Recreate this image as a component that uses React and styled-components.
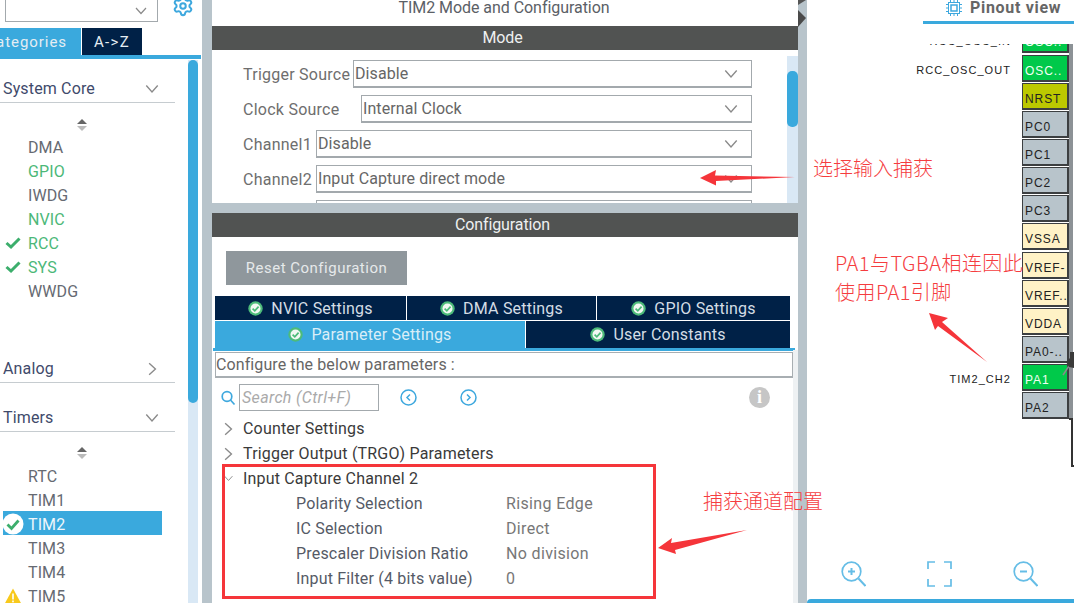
import React from 'react'
import styled, { createGlobalStyle } from 'styled-components'
import { Settings } from 'lucide-react'

const GlobalStyle = createGlobalStyle`
	html, body {
		margin: 0;
		padding: 0;
		background: #fff;
	}
	body {
		font-family: Roboto, "Liberation Sans", sans-serif;
		overflow: hidden;
	}
	* {
		box-sizing: border-box;
	}
	svg {
		flex: none;
	}
`

const Page = styled.div`
	position: relative;
	display: flex;
	width: 1074px;
	height: 603px;
	overflow: hidden;
	background: #fff;
`

const Gutter = styled.div`
	flex: none;
	width: ${props => props.$width}px;
	background: #b8c4cb;
`

const SplitBar = styled.div`
	flex: none;
	height: 10px;
	background: #b8c4cb;
`

/* left panel */
const LeftPanel = styled.div`
	flex: none;
	width: 202px;
	display: flex;
	flex-direction: column;
`

const TopRow = styled.div`
	display: flex;
	align-items: flex-start;
	height: 28px;
	padding-left: 5px;
`

const TopSelect = styled.div`
	display: flex;
	align-items: center;
	justify-content: flex-end;
	width: 153px;
	height: 22px;
	padding-right: 9px;
	border: 1px solid #a3a9ad;
	border-top: none;
`

const GearWrap = styled.div`
	display: flex;
	margin-left: 14px;
	margin-top: -5px;
	color: #3ea8de;
`

const ViewTabs = styled.div`
	display: flex;
	height: 31px;
	width: 201px;
	border-bottom: 4px solid #3aa9dd;
`

const ViewTab = styled.div`
	display: flex;
	align-items: center;
	justify-content: ${props => props.$active ? 'flex-end' : 'center'};
	width: ${props => props.$width}px;
	margin-right: 1px;
	padding-right: ${props => props.$active ? 14 : 0}px;
	background: ${props => props.$active ? '#3aa9dd' : '#002147'};
	color: #e4edf3;
	font-size: 15px;
	letter-spacing: ${props => props.$active ? 0.95 : 1.3}px;
`

const LeftBody = styled.div`
	flex: 1;
	display: flex;
	min-height: 0;
`

const LeftContent = styled.div`
	flex: none;
	width: 188px;
`

const ScrollTrack = styled.div`
	flex: none;
	width: ${props => props.$width}px;
	margin-top: ${props => props.$top}px;
	background: #d9e8f5;
`

const ScrollThumb = styled.div`
	height: ${props => props.$height}px;
	margin-top: ${props => props.$offset || 0}px;
	border-radius: 5px;
	background: #3aa9dd;
`

const SectionHead = styled.div`
	display: flex;
	align-items: center;
	justify-content: space-between;
	width: 175px;
	height: 30px;
	margin-top: ${props => props.$top}px;
	padding: 2px 15px 0 3px;
	border-bottom: 1px solid #c6ccd0;
	color: #3f4a6b;
	font-size: 16px;
	letter-spacing: 0.15px;
`

const SortMark = styled.div`
	display: flex;
	align-items: center;
	justify-content: center;
	width: 163px;
	height: 20px;
	margin-top: ${props => props.$top}px;
`

const ItemRow = styled.div`
	display: flex;
	align-items: center;
	width: 159px;
	height: 24px;
	margin-left: 3px;
	padding-top: ${props => props.$low ? 2 : 0}px;
	background: ${props => props.$selected ? '#3aa9dd' : 'transparent'};
	color: ${props => props.$selected ? '#eef6fb' : props.$ok ? '#4cb878' : '#666a72'};
	font-size: 16px;
	letter-spacing: 0.1px;
`

const ItemIcon = styled.div`
	display: flex;
	align-items: center;
	justify-content: center;
	flex: none;
	width: 20px;
	margin-right: 5px;
`

/* centre panel */
const CenterPanel = styled.div`
	flex: none;
	width: 586px;
	display: flex;
	flex-direction: column;
`

const Title = styled.div`
	height: 26px;
	padding: 0 2px 10px 0;
	color: #5b6066;
	font-size: 16px;
	line-height: 16px;
	text-align: center;
	letter-spacing: -0.05px;
`

const DarkBar = styled.div`
	flex: none;
	height: 24px;
	padding-right: 5px;
	background: #515352;
	color: #eef0f0;
	font-size: 16px;
	line-height: 24px;
	text-align: center;
	letter-spacing: -0.1px;
`

const ModeArea = styled.div`
	display: flex;
	height: 153px;
	overflow: hidden;
`

const ModeForm = styled.div`
	flex: none;
	width: 575px;
	display: flex;
	flex-direction: column;
	gap: 7px;
	padding: 10px 0 0 31px;
`

const FormRow = styled.div`
	display: flex;
	align-items: center;
	flex: none;
	width: 509px;
	height: 28px;
`

const FormLabel = styled.div`
	flex: none;
	width: ${props => props.$width}px;
	color: #6e6e6e;
	font-size: 16px;
	letter-spacing: 0.25px;
	white-space: nowrap;
`

const FormSelect = styled.div`
	flex: 1;
	display: flex;
	align-items: center;
	justify-content: space-between;
	height: 28px;
	padding: 0 12px 0 1px;
	border: 1px solid #a3a9ad;
	border-bottom-width: 2px;
	color: #666;
	font-size: 16px;
	letter-spacing: 0.08px;
`

const ConfigArea = styled.div`
	flex: 1;
	display: flex;
	flex-direction: column;
	position: relative;
	min-height: 0;
`

const ResetButton = styled.div`
	width: 181px;
	height: 34px;
	margin: 14px 0 0 14px;
	background: #8f979c;
	color: #e6e9ea;
	font-size: 15px;
	line-height: 34px;
	text-align: center;
	letter-spacing: 0.5px;
`

const TabsBlock = styled.div`
	display: flex;
	flex-direction: column;
	gap: 1px;
	margin: 11px 0 0 3px;
	width: 575px;
`

const TabLine = styled.div`
	display: flex;
	gap: 1px;
	height: ${props => props.$height}px;
`

const SettingTab = styled.div`
	display: flex;
	align-items: center;
	justify-content: center;
	gap: 8px;
	flex: ${props => props.$flex};
	background: ${props => props.$active ? '#3aa9dd' : '#002147'};
	color: ${props => props.$active ? '#d9eef8' : '#d4dde5'};
	font-size: 16px;
	letter-spacing: 0.2px;
`

const TabRule = styled.div`
	width: 582px;
	height: 3px;
	margin-left: 1px;
	background: #3aa9dd;
`

const InfoStrip = styled.div`
	position: absolute;
	top: 113px;
	right: 0;
	bottom: 0;
	width: 5px;
	background: #eef1f3;
`

const ParamsCaption = styled.div`
	width: 578px;
	height: 26px;
	margin: 1px 0 0 3px;
	border: 1px solid #a8aeb2;
	border-bottom-width: 2px;
	color: #666;
	font-size: 16px;
	line-height: 24px;
	letter-spacing: 0.1px;
`

const SearchRow = styled.div`
	display: flex;
	align-items: center;
	height: 27px;
	margin-top: 6px;
	padding-left: 9px;
`

const SearchBox = styled.div`
	width: 140px;
	height: 27px;
	margin-left: 3px;
	padding-left: 2px;
	border: 1px solid #a3a9ad;
	color: #aaa;
	font-size: 16px;
	font-style: italic;
	line-height: 25px;
	letter-spacing: 0.35px;
`

const NavButton = styled.div`
	display: flex;
	margin-left: ${props => props.$left}px;
	color: #3ea8de;
`

const InfoBadge = styled.div`
	width: 21px;
	height: 21px;
	margin-left: 272px;
	border-radius: 50%;
	background: #c6c6c6;
	color: #fff;
	font-family: "Liberation Serif", serif;
	font-size: 18px;
	font-weight: bold;
	line-height: 21px;
	text-align: center;
`

const Tree = styled.div`
	margin-top: 5px;
`

const TreeRow = styled.div`
	display: flex;
	align-items: center;
	height: 25px;
	padding-left: ${props => props.$child ? 84 : 11}px;
	color: ${props => props.$child ? '#555a66' : '#3a3a3a'};
	font-size: 16px;
	letter-spacing: 0.18px;
`

const TreeArrow = styled.div`
	display: flex;
	justify-content: center;
	flex: none;
	width: 10px;
	margin-right: 10px;
	color: #8a8a8a;
`

const ParamName = styled.div`
	flex: none;
	width: 210px;
`

const ParamValue = styled.div`
	color: #777;
	letter-spacing: 0.35px;
`

/* right panel */
const RightPanel = styled.div`
	flex: 1;
	display: flex;
	flex-direction: column;
	min-width: 0;
`

const PinoutTab = styled.div`
	display: flex;
	align-items: flex-start;
	gap: 8px;
	flex: none;
	height: 24px;
	margin-left: 116px;
	padding-left: 23px;
	border-bottom: 3px solid #3aa9dd;
	color: #666;
	font-size: 16px;
	font-weight: bold;
	line-height: 16px;
	letter-spacing: 0.7px;
	white-space: nowrap;
`

const PinBoard = styled.div`
	display: flex;
	justify-content: flex-end;
	flex: none;
	height: 376px;
	margin-top: 20px;
	overflow: hidden;
`

const PinColumn = styled.div`
	flex: none;
	margin-top: -18.15px;
`

const PinRow = styled.div`
	display: flex;
	align-items: center;
	justify-content: flex-end;
	height: 28.15px;
`

const PinLabel = styled.div`
	margin: 3px 11px 0 0;
	color: #222;
	font-family: "Liberation Sans", sans-serif;
	font-size: 11px;
	letter-spacing: 1.05px;
	white-space: nowrap;
`

const Pin = styled.div`
	display: flex;
	align-items: flex-end;
	flex: none;
	width: 47px;
	height: 27px;
	padding: 0 0 2px 2px;
	border: 1px solid #3c3f41;
	border-width: 1px 2px 2px 1px;
	background: ${props => props.$fill};
	color: ${props => props.$light ? '#f0fff4' : '#222'};
	font-family: "Liberation Sans", sans-serif;
	font-size: 12px;
	line-height: 13px;
	letter-spacing: 0.9px;
	overflow: hidden;
	white-space: nowrap;
`

const ChipEdge = styled.div`
	flex: none;
	width: 4px;
	margin-right: 1px;
	border-bottom: 2px solid #333;
	background: #8c9296;
`

const ChipStub = styled.div`
	flex: none;
	align-self: flex-end;
	width: 3px;
	height: 47px;
	border-left: 2px solid #333;
	border-bottom: 2px solid #333;
`

const ZoomRow = styled.div`
	display: flex;
	gap: 61px;
	flex: none;
	margin-top: 94px;
	padding-left: 34px;
	color: #65bde6;
`

const BottomBar = styled.div`
	flex: none;
	height: 4px;
	margin-top: 12px;
	border-radius: 4px 0 0 0;
	background: #3aa9dd;
`

/* things lying over the panels */
const RedBox = styled.div`
	position: absolute;
	left: 222px;
	top: 464px;
	width: 434px;
	height: 135px;
	border: 3px solid #f5353a;
	pointer-events: none;
`

const Note = styled.div`
	position: absolute;
	left: ${props => props.$x}px;
	top: ${props => props.$y}px;
	color: #f53d3f;
	font-family: "Noto Sans CJK SC", "Noto Sans", sans-serif;
	font-size: 20px;
	font-weight: 300;
	line-height: 29px;
	letter-spacing: ${props => props.$spacing || 0}px;
	white-space: nowrap;
`

const ArrowLayer = styled.svg`
	position: absolute;
	left: 0;
	top: 0;
	pointer-events: none;
`

const CollapseMark = styled.svg`
	position: absolute;
	left: 798px;
	top: 0;
`

const PinMark = styled.svg`
	position: absolute;
	left: 1061px;
	top: 352px;
`

const Chevron = ({ dir = 'down', size = 14, color = '#8a8a8a' }) => {
	const points = {
		down: '2,4 7,9.5 12,4',
		right: '4.5,2 10,7 4.5,12',
	}
	return (
		<svg width={size} height={size} viewBox='0 0 14 14' fill='none' stroke={color} strokeWidth='1.2'>
			<polyline points={points[dir]} />
		</svg>
	)
}

const SortIcon = () => (
	<svg width='12' height='14' viewBox='0 0 12 14'>
		<polygon points='6,1 11,6 1,6' fill='#666' />
		<polygon points='6,13 11,8 1,8' fill='#bbb' />
	</svg>
)

const Tick = () => (
	<svg width='16' height='14' viewBox='0 0 16 14' fill='none' stroke='#3cae6c' strokeWidth='3'>
		<polyline points='1.5,7 6,11 14.5,2.5' />
	</svg>
)

const TickBadge = () => (
	<svg width='22' height='22' viewBox='0 0 22 22'>
		<circle cx='11' cy='11' r='10.5' fill='#fff' />
		<polyline points='5.5,11.5 9.5,15.5 16.5,7.5' fill='none' stroke='#3cae6c' strokeWidth='2.8' />
	</svg>
)

const Warn = () => (
	<svg width='18' height='16' viewBox='0 0 18 16'>
		<polygon points='9,0.5 17.5,16 0.5,16' fill='#f8c91c' />
		<rect x='8.2' y='5.5' width='1.6' height='6' fill='#fff' />
		<rect x='8.2' y='12.5' width='1.6' height='1.8' fill='#fff' />
	</svg>
)

const TabTick = () => (
	<svg width='15' height='15' viewBox='0 0 15 15'>
		<circle cx='7.5' cy='7.5' r='7.2' fill='#4dbb7a' />
		<circle cx='7.5' cy='7.5' r='5' fill='#f2f8f3' />
		<polyline points='4.6,7.6 6.8,9.8 10.6,5.6' fill='none' stroke='#4dbb7a' strokeWidth='1.7' />
	</svg>
)

const SearchIcon = () => (
	<svg width='15' height='16' viewBox='0 0 15 16' fill='none' stroke='#3ea8de' strokeWidth='1.7'>
		<circle cx='6' cy='6.5' r='4.8' />
		<line x1='9.5' y1='10' x2='13.5' y2='14.5' />
	</svg>
)

const CircleArrow = ({ dir }) => (
	<svg width='17' height='17' viewBox='0 0 17 17' fill='none' stroke='currentColor' strokeWidth='1.5'>
		<circle cx='8.5' cy='8.5' r='7.5' />
		<polyline points={dir === 'left' ? '10,5.5 7,8.5 10,11.5' : '7,5.5 10,8.5 7,11.5'} />
	</svg>
)

const ChipIcon = () => (
	<svg width='16' height='16' viewBox='0 0 16 16' fill='none' stroke='#3ea8de' strokeWidth='1'>
		<rect x='2.5' y='2.5' width='11' height='11' />
		<rect x='5' y='5' width='6' height='6' strokeWidth='1.5' />
		<path d='M4.5 0v2.5M8 0v2.5M11.5 0v2.5M4.5 13.5V16M8 13.5V16M11.5 13.5V16M0 4.5h2.5M0 8h2.5M0 11.5h2.5M13.5 4.5H16M13.5 8H16M13.5 11.5H16' />
	</svg>
)

const ZoomGlass = ({ plus }) => (
	<svg width='25' height='26' viewBox='0 0 25 26' fill='none' stroke='currentColor' strokeWidth='1.7'>
		<circle cx='10.5' cy='10.5' r='9.3' />
		<line x1='17.5' y1='17.5' x2='24.5' y2='25' strokeWidth='2' />
		<line x1='7' y1='10.5' x2='14' y2='10.5' strokeWidth='2' />
		{plus && <line x1='10.5' y1='7' x2='10.5' y2='14' strokeWidth='2' />}
	</svg>
)

const FitIcon = () => (
	<svg width='25' height='26' viewBox='0 0 25 26' fill='none' stroke='currentColor' strokeWidth='1.7'>
		<path d='M1 8V1h7M17 1h7v7M1 18v7h7M17 25h7v-7' />
	</svg>
)

const coreItems = [
	{ name: 'DMA' },
	{ name: 'GPIO', ok: true },
	{ name: 'IWDG' },
	{ name: 'NVIC', ok: true },
	{ name: 'RCC', ok: true, icon: 'tick' },
	{ name: 'SYS', ok: true, icon: 'tick' },
	{ name: 'WWDG' },
]

const timerItems = [
	{ name: 'RTC' },
	{ name: 'TIM1' },
	{ name: 'TIM2', selected: true, icon: 'badge' },
	{ name: 'TIM3' },
	{ name: 'TIM4' },
	{ name: 'TIM5', icon: 'warn' },
]

const modeRows = [
	{ label: 'Trigger Source', width: 110, value: 'Disable' },
	{ label: 'Clock Source', width: 118, value: 'Internal Clock' },
	{ label: 'Channel1', width: 73, value: 'Disable' },
	{ label: 'Channel2', width: 73, value: 'Input Capture direct mode' },
	{ label: '', width: 73, value: '' },
]

const params = [
	{ name: 'Polarity Selection', value: 'Rising Edge' },
	{ name: 'IC Selection', value: 'Direct' },
	{ name: 'Prescaler Division Ratio', value: 'No division' },
	{ name: 'Input Filter (4 bits value)', value: '0' },
]

const GREEN = '#00c94a'
const GRAY = '#b8c4cb'
const CREAM = '#fff2c6'

const pins = [
	{ text: 'OSC..', fill: GREEN, light: true, label: 'RCC_OSC_IN' },
	{ text: 'OSC..', fill: GREEN, light: true, label: 'RCC_OSC_OUT' },
	{ text: 'NRST', fill: '#bcc800' },
	{ text: 'PC0', fill: GRAY },
	{ text: 'PC1', fill: GRAY },
	{ text: 'PC2', fill: GRAY },
	{ text: 'PC3', fill: GRAY },
	{ text: 'VSSA', fill: CREAM },
	{ text: 'VREF-', fill: CREAM },
	{ text: 'VREF..', fill: CREAM },
	{ text: 'VDDA', fill: CREAM },
	{ text: 'PA0-..', fill: GRAY },
	{ text: 'PA1', fill: GREEN, light: true, label: 'TIM2_CH2' },
	{ text: 'PA2', fill: GRAY },
]

const renderIcon = (icon) => {
	if (icon === 'tick') return <Tick />
	if (icon === 'badge') return <TickBadge />
	if (icon === 'warn') return <Warn />
	return null
}

const renderItems = (items, low) => items.map(item => (
	<ItemRow key={item.name} $ok={item.ok} $selected={item.selected} $low={low}>
		<ItemIcon>{renderIcon(item.icon)}</ItemIcon>
		{item.name}
	</ItemRow>
))

export default function App() {
	return (
		<Page>
			<GlobalStyle />

			<LeftPanel>
				<TopRow>
					<TopSelect><Chevron size={14} /></TopSelect>
					<GearWrap><Settings size={22} strokeWidth={2.2} /></GearWrap>
				</TopRow>
				<ViewTabs>
					<ViewTab $active $width={81}>Categories</ViewTab>
					<ViewTab $width={60}>A-&gt;Z</ViewTab>
				</ViewTabs>
				<LeftBody>
					<LeftContent>
						<SectionHead $top={14}>System Core<Chevron size={16} /></SectionHead>
						<SortMark $top={12}><SortIcon /></SortMark>
						{renderItems(coreItems, false)}
						<SectionHead $top={50}>Analog<Chevron dir='right' size={16} /></SectionHead>
						<SectionHead $top={19}>Timers<Chevron size={16} /></SectionHead>
						<SortMark $top={11}><SortIcon /></SortMark>
						{renderItems(timerItems, true)}
					</LeftContent>
					<ScrollTrack $width={10} $top={1}>
						<ScrollThumb $height={343} />
					</ScrollTrack>
				</LeftBody>
			</LeftPanel>

			<Gutter $width={10} />

			<CenterPanel>
				<Title>TIM2 Mode and Configuration</Title>
				<DarkBar>Mode</DarkBar>
				<ModeArea>
					<ModeForm>
						{modeRows.map((row, index) => (
							<FormRow key={index}>
								<FormLabel $width={row.width}>{row.label}</FormLabel>
								<FormSelect>
									{row.value}
									<Chevron size={16} />
								</FormSelect>
							</FormRow>
						))}
					</ModeForm>
					<ScrollTrack $width={11} $top={6}>
						<ScrollThumb $height={56} $offset={15} />
					</ScrollTrack>
				</ModeArea>
				<SplitBar />
				<DarkBar>Configuration</DarkBar>
				<ConfigArea>
					<InfoStrip />
					<ResetButton>Reset Configuration</ResetButton>
					<TabsBlock>
						<TabLine $height={24}>
							<SettingTab $flex='191'><TabTick />NVIC Settings</SettingTab>
							<SettingTab $flex='189'><TabTick />DMA Settings</SettingTab>
							<SettingTab $flex='193'><TabTick />GPIO Settings</SettingTab>
						</TabLine>
						<TabLine $height={27}>
							<SettingTab $flex='310' $active><TabTick />Parameter Settings</SettingTab>
							<SettingTab $flex='264'><TabTick />User Constants</SettingTab>
						</TabLine>
					</TabsBlock>
					<TabRule />
					<ParamsCaption>Configure the below parameters :</ParamsCaption>
					<SearchRow>
						<SearchIcon />
						<SearchBox>Search (Ctrl+F)</SearchBox>
						<NavButton $left={21}><CircleArrow dir='left' /></NavButton>
						<NavButton $left={43}><CircleArrow dir='right' /></NavButton>
						<InfoBadge>i</InfoBadge>
					</SearchRow>
					<Tree>
						<TreeRow>
							<TreeArrow><Chevron dir='right' size={16} /></TreeArrow>
							Counter Settings
						</TreeRow>
						<TreeRow>
							<TreeArrow><Chevron dir='right' size={16} /></TreeArrow>
							Trigger Output (TRGO) Parameters
						</TreeRow>
						<TreeRow>
							<TreeArrow><Chevron size={11} /></TreeArrow>
							Input Capture Channel 2
						</TreeRow>
						{params.map(param => (
							<TreeRow key={param.name} $child>
								<ParamName>{param.name}</ParamName>
								<ParamValue>{param.value}</ParamValue>
							</TreeRow>
						))}
					</Tree>
				</ConfigArea>
			</CenterPanel>

			<Gutter $width={9} />

			<RightPanel>
				<PinoutTab><ChipIcon />Pinout view</PinoutTab>
				<PinBoard>
					<PinColumn>
						{pins.map((pin, index) => (
							<PinRow key={index}>
								{pin.label && <PinLabel>{pin.label}</PinLabel>}
								<Pin $fill={pin.fill} $light={pin.light}>{pin.text}</Pin>
							</PinRow>
						))}
					</PinColumn>
					<ChipEdge />
				</PinBoard>
				<ChipStub />
				<ZoomRow>
					<ZoomGlass plus />
					<FitIcon />
					<ZoomGlass />
				</ZoomRow>
				<BottomBar />
			</RightPanel>

			<CollapseMark width='9' height='28' viewBox='0 0 9 28'>
				<polygon points='0,-4 8,0 0,5' fill='#555' />
				<polygon points='0,10 8,18 0,27' fill='#4a4a4a' />
			</CollapseMark>

			<PinMark width='13' height='24' viewBox='0 0 13 24'>
				<line x1='10' y1='11' x2='2' y2='23' stroke='#8a8a8a' strokeWidth='1.5' />
				<polygon points='5,10 9,6 9,0 13,0 13,16 8,15' fill='#3a3a3a' />
			</PinMark>

			<RedBox />
			<ArrowLayer width='1074' height='603' viewBox='0 0 1074 603'>
				<polygon points='700,178 716,170 715,175.5 795,177 716,181 716,185.5' fill='#f5353a' />
				<polygon points='929,313 948,318 942,322 987,362 938,326 935,330' fill='#f5353a' />
				<polygon points='658,548 672,538 671,543 747,530 675,550 676,554' fill='#f5353a' />
			</ArrowLayer>
			<Note $x={813} $y={153}>选择输入捕获</Note>
			<Note $x={835} $y={248} $spacing={0.45}>PA1与TGBA相连因此</Note>
			<Note $x={835} $y={277} $spacing={0.45}>使用PA1引脚</Note>
			<Note $x={703} $y={486}>捕获通道配置</Note>
		</Page>
	)
}
